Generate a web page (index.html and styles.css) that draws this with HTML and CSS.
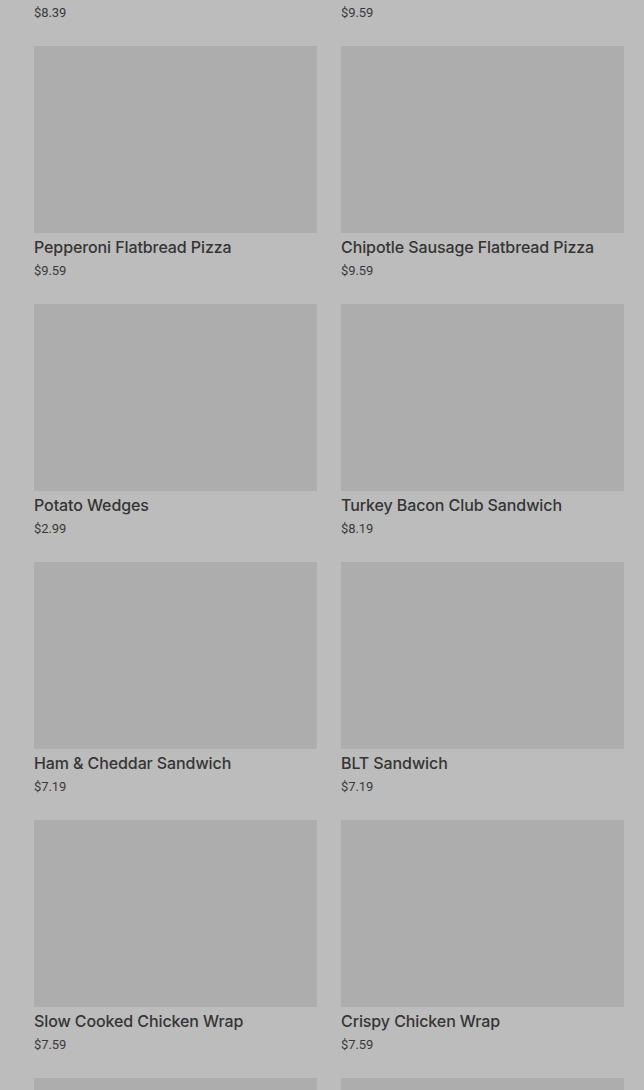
FILE: index.html
```html
<!DOCTYPE html>
<html lang="en">
<head>
  <meta charset="UTF-8">
  <title>Menu</title>
  <link rel="stylesheet" href="styles.css">
</head>
<body>
  <div class="menu">
    <div class="item"><div class="photo"></div><div class="name">Cheese Flatbread Pizza</div><div class="price">$8.39</div></div>
    <div class="item"><div class="photo"></div><div class="name">Supreme Flatbread Pizza</div><div class="price">$9.59</div></div>

    <div class="item"><div class="photo"></div><div class="name">Pepperoni Flatbread Pizza</div><div class="price">$9.59</div></div>
    <div class="item"><div class="photo"></div><div class="name">Chipotle Sausage Flatbread Pizza</div><div class="price">$9.59</div></div>

    <div class="item"><div class="photo"></div><div class="name">Potato Wedges</div><div class="price">$2.99</div></div>
    <div class="item"><div class="photo"></div><div class="name">Turkey Bacon Club Sandwich</div><div class="price">$8.19</div></div>

    <div class="item"><div class="photo"></div><div class="name">Ham &amp; Cheddar Sandwich</div><div class="price">$7.19</div></div>
    <div class="item"><div class="photo"></div><div class="name">BLT Sandwich</div><div class="price">$7.19</div></div>

    <div class="item"><div class="photo"></div><div class="name">Slow Cooked Chicken Wrap</div><div class="price">$7.59</div></div>
    <div class="item"><div class="photo"></div><div class="name">Crispy Chicken Wrap</div><div class="price">$7.59</div></div>

    <div class="item"><div class="photo"></div></div>
    <div class="item"><div class="photo"></div></div>
  </div>
</body>
</html>
```

FILE: styles.css
```css
body {
  margin: 0;
  background-color: #bcbcbc;
  font-family: Inter, "Liberation Sans", sans-serif;
  color: #353535;
  overflow: hidden;
}
.menu {
  display: grid;
  grid-template-columns: repeat(2, 1fr);
  column-gap: 24px;
  row-gap: 24px;
  padding: 0 20px 0 34px;
  margin-top: -212px;
}
.photo {
  height: 187px;
  background-color: #adadad;
}
.name {
  margin-top: 3px;
  font-size: 16px;
  line-height: 22px;
  font-weight: 500;
  letter-spacing: -0.1px;
  white-space: nowrap;
}
.price {
  margin-top: 4px;
  font-family: Roboto, "Liberation Sans", sans-serif;
  font-size: 13px;
  line-height: 18px;
  letter-spacing: -0.1px;
  color: #3a3a3a;
}
```
